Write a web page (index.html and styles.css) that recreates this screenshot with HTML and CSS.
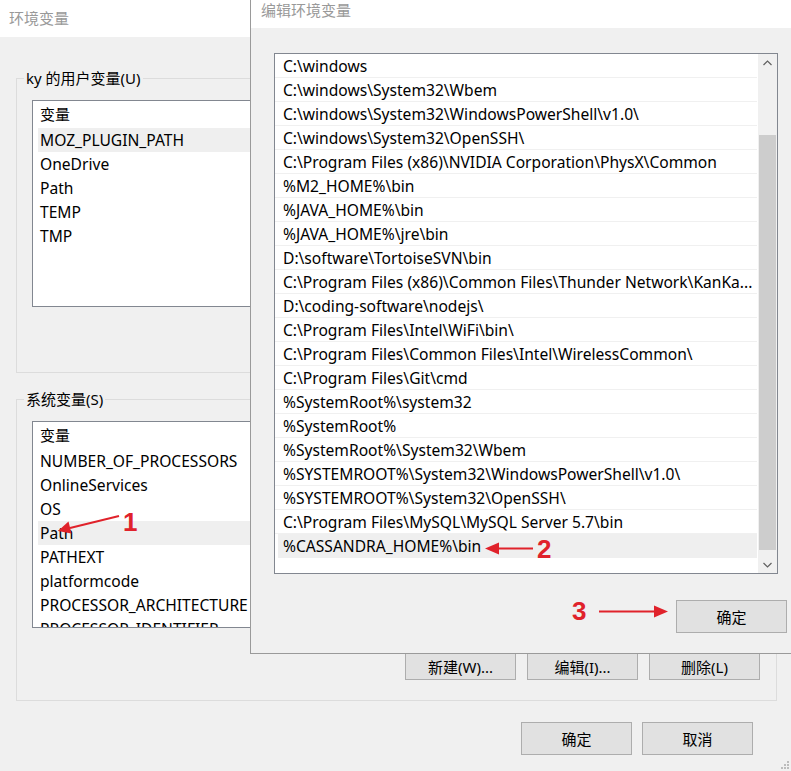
FILE: index.html
```html
<!DOCTYPE html>
<html lang="zh-CN">

<head>
  <meta charset="UTF-8">
  <meta name="viewport" content="width=device-width, initial-scale=1.0">
  <title>环境变量</title>
  <link rel="stylesheet" href="styles.css">
</head>

<body>
  <div class="desktop">

    <!-- back window: 环境变量 -->
    <div class="window env-window">
      <div class="title-bar">环境变量</div>
      <div class="window-body">
        <fieldset class="group group-user">
          <legend>ky 的用户变量(U)</legend>
          <div class="listview">
            <div class="lv-header">变量</div>
            <div class="lv-rows">
              <div class="lv-row selected">MOZ_PLUGIN_PATH</div>
              <div class="lv-row">OneDrive</div>
              <div class="lv-row">Path</div>
              <div class="lv-row">TEMP</div>
              <div class="lv-row">TMP</div>
            </div>
          </div>
        </fieldset>

        <fieldset class="group group-system">
          <legend>系统变量(S)</legend>
          <div class="listview">
            <div class="lv-header">变量</div>
            <div class="lv-rows">
              <div class="lv-row">NUMBER_OF_PROCESSORS</div>
              <div class="lv-row">OnlineServices</div>
              <div class="lv-row">OS</div>
              <div class="lv-row selected">Path</div>
              <div class="lv-row">PATHEXT</div>
              <div class="lv-row">platformcode</div>
              <div class="lv-row">PROCESSOR_ARCHITECTURE</div>
              <div class="lv-row">PROCESSOR_IDENTIFIER</div>
            </div>
          </div>
          <div class="group-buttons">
            <button class="btn">新建(W)...</button>
            <button class="btn">编辑(I)...</button>
            <button class="btn">删除(L)</button>
          </div>
        </fieldset>

        <div class="dialog-buttons">
          <button class="btn btn-lg">确定</button>
          <button class="btn btn-lg">取消</button>
        </div>
      </div>
      <svg class="size-grip" width="8" height="8" viewBox="0 0 8 8">
        <rect x="6" y="0" width="2" height="2" />
        <rect x="3" y="3" width="2" height="2" />
        <rect x="6" y="3" width="2" height="2" />
        <rect x="0" y="6" width="2" height="2" />
        <rect x="3" y="6" width="2" height="2" />
        <rect x="6" y="6" width="2" height="2" />
      </svg>
    </div>

    <!-- front window: 编辑环境变量 -->
    <div class="window edit-window">
      <div class="title-bar">编辑环境变量</div>
      <div class="edit-body">
        <div class="path-list">
          <div class="path-rows">
            <div class="path-row">C:\windows</div>
            <div class="path-row">C:\windows\System32\Wbem</div>
            <div class="path-row">C:\windows\System32\WindowsPowerShell\v1.0\</div>
            <div class="path-row">C:\windows\System32\OpenSSH\</div>
            <div class="path-row">C:\Program Files (x86)\NVIDIA Corporation\PhysX\Common</div>
            <div class="path-row">%M2_HOME%\bin</div>
            <div class="path-row">%JAVA_HOME%\bin</div>
            <div class="path-row">%JAVA_HOME%\jre\bin</div>
            <div class="path-row">D:\software\TortoiseSVN\bin</div>
            <div class="path-row">C:\Program Files (x86)\Common Files\Thunder Network\KanKa...</div>
            <div class="path-row">D:\coding-software\nodejs\</div>
            <div class="path-row">C:\Program Files\Intel\WiFi\bin\</div>
            <div class="path-row">C:\Program Files\Common Files\Intel\WirelessCommon\</div>
            <div class="path-row">C:\Program Files\Git\cmd</div>
            <div class="path-row">%SystemRoot%\system32</div>
            <div class="path-row">%SystemRoot%</div>
            <div class="path-row">%SystemRoot%\System32\Wbem</div>
            <div class="path-row">%SYSTEMROOT%\System32\WindowsPowerShell\v1.0\</div>
            <div class="path-row">%SYSTEMROOT%\System32\OpenSSH\</div>
            <div class="path-row">C:\Program Files\MySQL\MySQL Server 5.7\bin</div>
            <div class="path-row selected">%CASSANDRA_HOME%\bin</div>
          </div>
          <div class="scrollbar">
            <div class="sb-arrow">
              <svg width="9" height="6" viewBox="0 0 9 6"><path d="M0.5 5 L4.5 1 L8.5 5" /></svg>
            </div>
            <div class="sb-track">
              <div class="sb-thumb"></div>
            </div>
            <div class="sb-arrow">
              <svg width="9" height="6" viewBox="0 0 9 6"><path d="M0.5 1 L4.5 5 L8.5 1" /></svg>
            </div>
          </div>
        </div>
        <div class="edit-footer">
          <button class="btn btn-lg">确定</button>
        </div>
      </div>
    </div>

    <!-- red step markers -->
    <svg class="annotations" width="791" height="771" viewBox="0 0 791 771">
      <line x1="119" y1="516" x2="70" y2="528" />
      <polygon points="58,531 71.5,533.5 68.5,521.5" />
      <text x="123" y="531">1</text>

      <line x1="533" y1="548.5" x2="496" y2="548.5" />
      <polygon points="485,548.5 499,542.5 499,554.5" />
      <text x="537" y="558">2</text>

      <line x1="599" y1="611.5" x2="656" y2="611.5" />
      <polygon points="668,611.5 654,605.5 654,617.5" />
      <text x="572" y="620">3</text>
    </svg>
  </div>
</body>

</html>
```

FILE: styles.css
```css
body {
  margin: 0;
  font-family: 'Noto Sans', 'Noto Sans CJK SC', sans-serif;
  font-size: 15.6px;
  color: #000;
}

.desktop {
  position: relative;
  width: 791px;
  height: 771px;
  overflow: hidden;
  background-color: #f0f0f0;
}

.window {
  position: absolute;
  top: 0;
  display: flex;
  flex-direction: column;
  background-color: #f0f0f0;
}

.title-bar {
  background-color: #fff;
  color: #999;
  font-size: 15px;
  white-space: nowrap;
}

/* ---------- 环境变量 ---------- */

.env-window {
  left: 0;
  width: 791px;
  height: 771px;
}

.env-window .title-bar {
  height: 37px;
  line-height: 37px;
  padding-left: 9px;
}

.window-body {
  padding: 31px 14px 0 16px;
}

.group {
  margin: 0;
  padding: 12px 15px 20px;
  border: 1px solid #dcdcdc;
  min-width: 0;
}

.group legend {
  padding: 0 2px;
  margin-left: -8px;
  line-height: 20px;
  font-size: 15px;
}

/* the user group's own buttons sit behind the edit dialog */
.group-user {
  padding-bottom: 65px;
}

.group-system {
  margin-top: 16px;
}

.listview {
  height: 207px;
  box-sizing: border-box;
  border: 1px solid #828790;
  background-color: #fff;
  overflow: hidden;
}

.lv-header {
  height: 27px;
  line-height: 27px;
  padding-left: 7px;
  font-size: 15px;
}

.lv-rows {
  padding-left: 5px;
}

.lv-row {
  height: 24px;
  line-height: 24px;
  padding-left: 2px;
  white-space: nowrap;
}

.lv-row.selected,
.path-row.selected {
  background-color: #efefef;
}

.group-buttons {
  display: flex;
  justify-content: flex-end;
  gap: 11px;
  margin-top: 24px;
  padding-right: 1px;
}

.btn {
  width: 111px;
  height: 28px;
  padding: 0;
  border: 1px solid #adadad;
  background-color: #e1e1e1;
  font-family: inherit;
  font-size: 15px;
  color: #000;
}

.btn-lg {
  height: 33px;
}

.dialog-buttons {
  display: flex;
  justify-content: flex-end;
  gap: 10px;
  margin-top: 21px;
  padding-right: 24px;
}

.size-grip {
  position: absolute;
  right: 2px;
  bottom: 2px;
  fill: #bcbcbc;
}

/* ---------- 编辑环境变量 ---------- */

.edit-window {
  left: 250px;
  width: 560px;
  height: 654px;
  box-sizing: border-box;
  border-left: 1px solid #9a9a9a;
  border-bottom: 1px solid #9a9a9a;
}

.edit-window .title-bar {
  height: 28px;
  line-height: 20px;
  padding-left: 10px;
}

.edit-body {
  padding: 25px 0 0 23px;
}

.path-list {
  display: flex;
  width: 504px;
  height: 521px;
  box-sizing: border-box;
  border: 1px solid #828790;
  background-color: #fff;
}

.path-rows {
  flex: 1;
  min-width: 0;
}

.path-row {
  height: 24px;
  box-sizing: border-box;
  line-height: 24px;
  padding-left: 8px;
  border-bottom: 1px solid #f0f0f0;
  white-space: nowrap;
  overflow: hidden;
}

.path-row.selected {
  margin-left: 3px;
  padding-left: 5px;
  border-bottom: none;
}

.scrollbar {
  width: 19px;
  margin-left: 1px;
  display: flex;
  flex-direction: column;
  background-color: #f0f0f0;
}

.sb-arrow {
  height: 17px;
  display: flex;
  align-items: center;
  justify-content: center;
}

.sb-arrow path {
  fill: none;
  stroke: #606060;
  stroke-width: 1.2;
}

.sb-track {
  flex: 1;
  padding: 64px 1px 0;
}

.sb-thumb {
  height: 415px;
  background-color: #cdcdcd;
}

.edit-footer {
  display: flex;
  justify-content: flex-end;
  margin-top: 26px;
  padding-right: 23px;
}

/* ---------- step markers ---------- */

.annotations {
  position: absolute;
  left: 0;
  top: 0;
  pointer-events: none;
}

.annotations line {
  stroke: #e0222b;
  stroke-width: 2;
}

.annotations polygon {
  fill: #e0222b;
}

.annotations text {
  font-family: 'Liberation Sans', sans-serif;
  font-weight: bold;
  font-size: 26px;
  fill: #e0222b;
}
```
